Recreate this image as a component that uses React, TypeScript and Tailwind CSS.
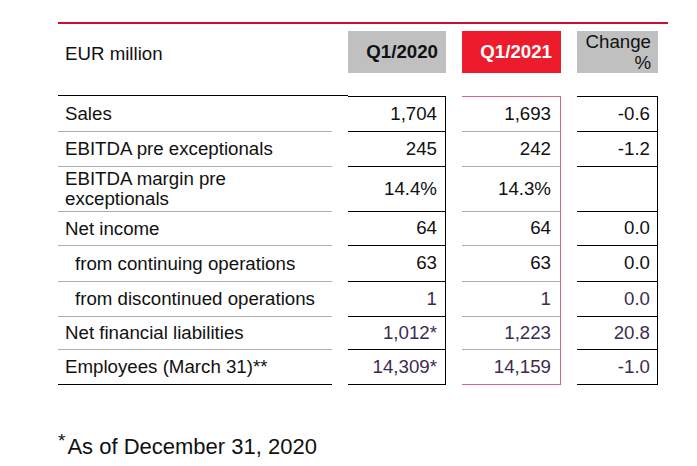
type Row = {
  label: string;
  indent?: boolean;
  tall?: boolean;
  a: string;
  b: string;
  c: string;
  purple?: boolean;
};

const rows: Row[] = [
  { label: "Sales", a: "1,704", b: "1,693", c: "-0.6" },
  { label: "EBITDA pre exceptionals", a: "245", b: "242", c: "-1.2" },
  { label: "EBITDA margin pre exceptionals", tall: true, a: "14.4%", b: "14.3%", c: "" },
  { label: "Net income", a: "64", b: "64", c: "0.0" },
  { label: "from continuing operations", indent: true, a: "63", b: "63", c: "0.0" },
  { label: "from discontinued operations", indent: true, a: "1", b: "1", c: "0.0", purple: true },
  { label: "Net financial liabilities", a: "1,012*", b: "1,223", c: "20.8", purple: true },
  { label: "Employees (March 31)**", a: "14,309*", b: "14,159", c: "-1.0", purple: true },
];

const heights = ["h-[36px]", "h-[35px]", "h-[45px]", "h-[34px]", "h-[36px]", "h-[35px]", "h-[33px]", "h-[35px]"];

export default function App() {
  return (
    <div
      className="w-[697px] h-[466px] bg-white text-[#111] relative"
      style={{ fontFamily: '"Liberation Sans", Arial, sans-serif' }}
    >
      <div className="pt-[22px] pl-[58px]">
        <div className="w-[610px] h-[2px] bg-[#c8102e]" />

        <div className="grid grid-cols-[274px_98px_99px_81px] gap-x-4 text-[18.7px]">
          {/* header */}
          <div className="h-[72px] -mr-4 border-b border-black flex items-start pt-[16px] pl-[7px]">
            EUR million
          </div>
          <div className="pt-[7px]">
            <div className="h-[42px] bg-[#c0c0c0] font-bold flex items-center justify-end pr-[8px]">Q1/2020</div>
          </div>
          <div className="pt-[7px]">
            <div className="h-[42px] bg-[#ec1c2d] text-white font-bold flex items-center justify-end pr-[9px]">Q1/2021</div>
          </div>
          <div className="pt-[7px]">
            <div className="h-[42px] bg-[#c0c0c0] flex flex-col items-end justify-center pr-[7px] leading-[21px]">
              <span>Change</span>
              <span>%</span>
            </div>
          </div>

          {rows.map((r, i) => {
            const last = i === rows.length - 1;
            const first = i === 0;
            const h = heights[i];
            const sep = last ? "border-b border-black" : "border-b border-[#adadad]";
            const val = r.purple ? "text-[#3d2b4f]" : "";
            return (
              <div key={r.label} className="contents">
                <div className={`${h} ${sep} flex items-center ${r.indent ? "pl-[17px]" : "pl-[7px]"} leading-[20px]`}>
                  {r.tall ? (
                    <span>
                      EBITDA margin pre
                      <br />
                      exceptionals
                    </span>
                  ) : (
                    r.label
                  )}
                </div>
                <div
                  className={`${h} ${sep} border-r border-black ${first ? "border-t" : ""} flex items-center justify-end pr-[8px] ${val}`}
                >
                  {r.a}
                </div>
                <div
                  className={`${h} ${last ? "border-b border-[#e0607a]" : "border-b border-[#adadad]"} border-r border-r-[#e0607a] ${first ? "border-t border-t-[#e0607a]" : ""} flex items-center justify-end pr-[9px] ${val}`}
                >
                  {r.b}
                </div>
                <div
                  className={`${h} ${sep} border-r border-black ${first ? "border-t" : ""} flex items-center justify-end pr-[7px] ${val}`}
                >
                  {r.c}
                </div>
              </div>
            );
          })}
        </div>

        <div className="mt-[49px] text-[22px] leading-[26px] flex items-start">
          <span className="text-[19px] leading-[19px] -mt-[3px] mr-[2px]">*</span>
          <span>As of December 31, 2020</span>
        </div>
      </div>
    </div>
  );
}
